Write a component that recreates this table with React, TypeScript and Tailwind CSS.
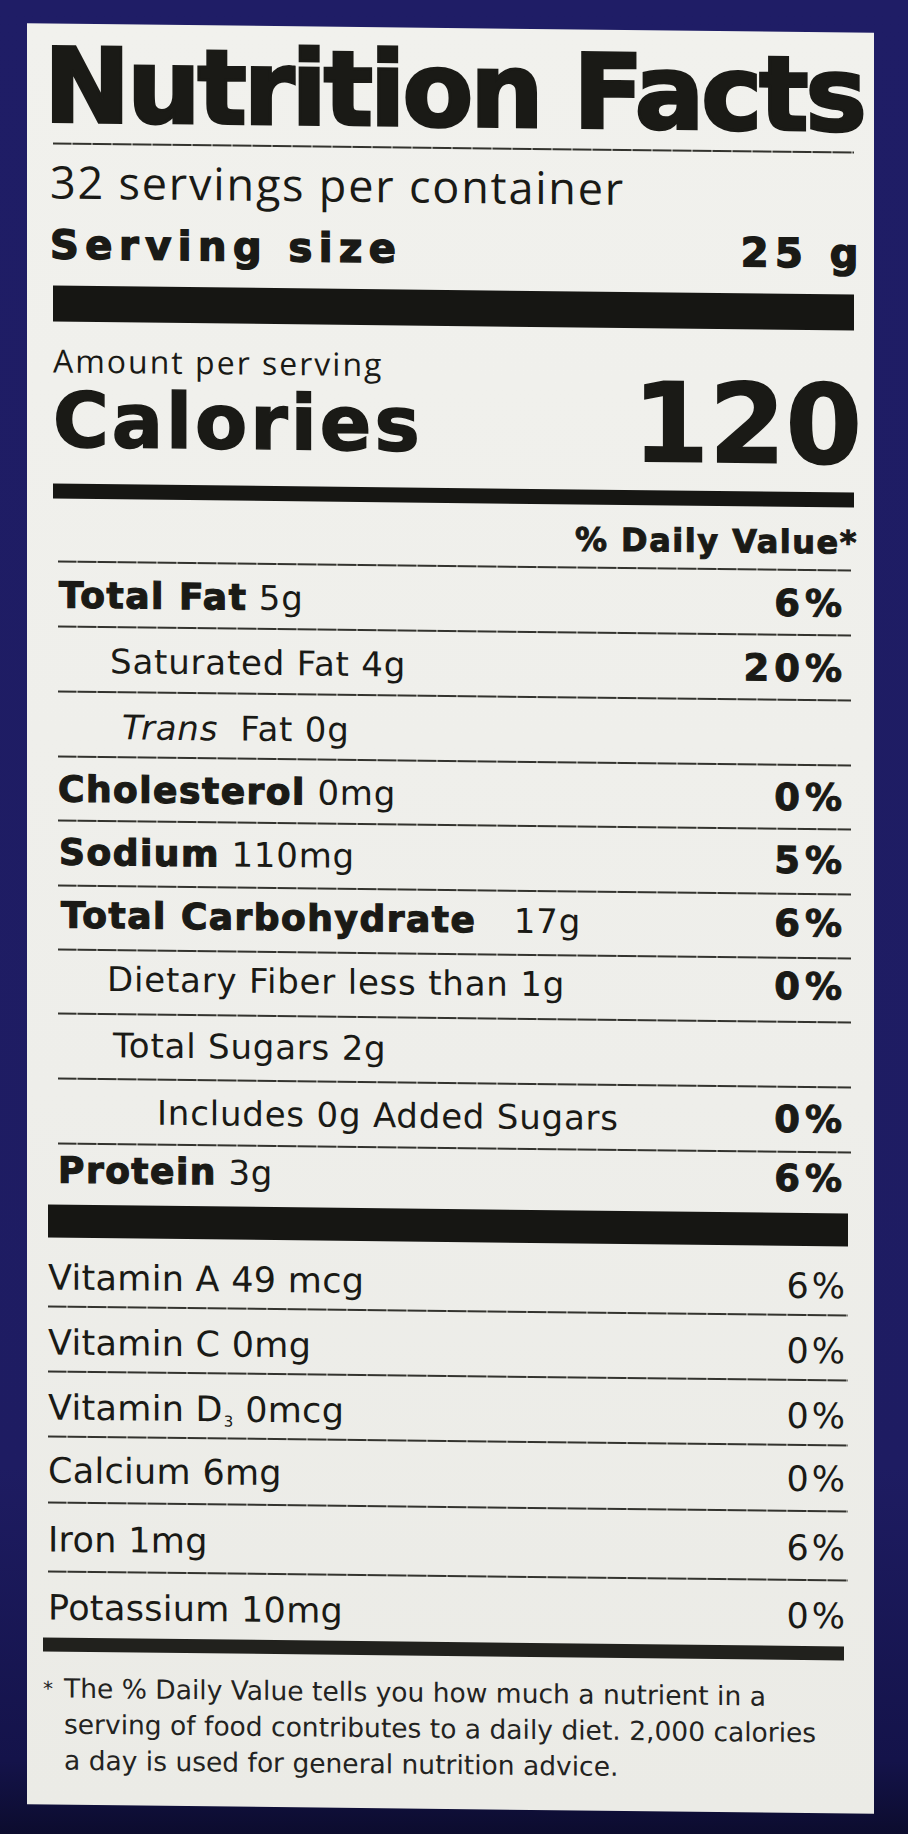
import React from "react";

const RULE =
  "h-[2px] w-full shrink-0 bg-[repeating-linear-gradient(90deg,#33332e_0px,#33332e_18px,#85857f_18px,#85857f_20px)]";

type Row = {
  h: string;
  pt: string;
  label: React.ReactNode;
  pct?: string;
  rule?: boolean;
};

const B = ({ children }: { children: React.ReactNode }) => (
  <span className="font-bold tracking-[1.5px] [-webkit-text-stroke:1.2px_currentColor]">{children}</span>
);
const R = ({ children, cls = "" }: { children: React.ReactNode; cls?: string }) => (
  <span className={`text-[34px] font-normal tracking-[0.8px] ${cls}`}>{children}</span>
);

const upperRows: Row[] = [
  {
    h: "h-[65px]",
    pt: "pt-[13px]",
    label: (
      <span className="pl-[1px]">
        <B>Total Fat</B> <R>5g</R>
      </span>
    ),
    pct: "6%",
  },
  {
    h: "h-[65px]",
    pt: "pt-[13px]",
    label: (
      <span className="pl-[52px]">
        <R>Saturated Fat 4g</R>
      </span>
    ),
    pct: "20%",
  },
  {
    h: "h-[65px]",
    pt: "pt-[14px]",
    label: (
      <span className="pl-[64px]">
        <R cls="italic">Trans</R>
        <R cls="ml-[22px]">Fat 0g</R>
      </span>
    ),
  },
  {
    h: "h-[64px]",
    pt: "pt-[12px]",
    label: (
      <span className="pl-[0px]">
        <B>Cholesterol</B> <R>0mg</R>
      </span>
    ),
    pct: "0%",
  },
  {
    h: "h-[65px]",
    pt: "pt-[11px]",
    label: (
      <span className="pl-[1px]">
        <B>Sodium</B> <R>110mg</R>
      </span>
    ),
    pct: "5%",
  },
  {
    h: "h-[64px]",
    pt: "pt-[9px]",
    label: (
      <span className="pl-[3px]">
        <B>Total Carbohydrate</B> <R cls="ml-[26px]">17g</R>
      </span>
    ),
    pct: "6%",
  },
  {
    h: "h-[64px]",
    pt: "pt-[8px]",
    label: (
      <span className="pl-[49px]">
        <R>Dietary Fiber less than 1g</R>
      </span>
    ),
    pct: "0%",
  },
  {
    h: "h-[65px]",
    pt: "pt-[10px]",
    label: (
      <span className="pl-[55px]">
        <R>Total Sugars 2g</R>
      </span>
    ),
  },
  {
    h: "h-[65px]",
    pt: "pt-[12px]",
    label: (
      <span className="pl-[99px]">
        <R>Includes 0g Added Sugars</R>
      </span>
    ),
    pct: "0%",
  },
  {
    h: "h-[62px]",
    pt: "pt-[6px]",
    label: (
      <span className="pl-[0px]">
        <B>Protein</B> <R>3g</R>
      </span>
    ),
    pct: "6%",
  },
];

const vitaminRows: Row[] = [
  { h: "h-[68px]", pt: "pt-[20px]", label: "Vitamin A 49 mcg", pct: "6%", rule: false },
  { h: "h-[65px]", pt: "pt-[15px]", label: "Vitamin C 0mg", pct: "0%", rule: true },
  {
    h: "h-[65px]",
    pt: "pt-[15px]",
    label: (
      <>
        Vitamin D<span className="ml-[1px] text-[15px] align-[-5px]">3</span> 0mcg
      </>
    ),
    pct: "0%",
    rule: true,
  },
  { h: "h-[66px]", pt: "pt-[13px]", label: "Calcium 6mg", pct: "0%", rule: true },
  { h: "h-[69px]", pt: "pt-[16px]", label: "Iron 1mg", pct: "6%", rule: true },
  { h: "h-[67px]", pt: "pt-[15px]", label: "Potassium 10mg", pct: "0%", rule: true },
];

export default function App() {
  return (
    <div className="w-[908px] h-[1834px] overflow-hidden bg-[linear-gradient(180deg,#1f1d66_0%,#1e1c62_80%,#14134a_96%,#0c0c2e_100%)] pt-[28px] pl-[27px]">
      <div className="w-[847px] h-[1781px] skew-y-[0.65deg] bg-[linear-gradient(180deg,#f1f1ed_0%,#eeeeea_60%,#ebebe6_100%)] pl-[26px] pr-[20px] pt-[12px] text-[#1a1a16] font-['DejaVu_Sans',sans-serif] flex flex-col">
        {/* Title */}
        <div className="ml-[-9px] h-[100px] shrink-0 text-[103px] leading-[100px] font-bold tracking-[-3px] whitespace-nowrap [-webkit-text-stroke:3px_currentColor]">
          Nutrition Facts
        </div>
        <div className={`mt-[7px] ${RULE}`} />
        <div className="mt-[13px] ml-[-3px] h-[48px] shrink-0 font-['Open_Sans',sans-serif] text-[45px] leading-[48px] tracking-[1.8px] whitespace-nowrap">
          32 servings per container
        </div>
        <div className="mt-[17px] h-[44px] shrink-0 flex justify-between text-[40px] leading-[44px] font-bold tracking-[6.5px] whitespace-nowrap [-webkit-text-stroke:1.5px_currentColor]">
          <span className="ml-[-3px]">Serving size</span>
          <span className="mr-[-11px]">25 g</span>
        </div>
        <div className="mt-[19px] h-[36px] shrink-0 bg-[#161613]" />
        <div className="mt-[21px] h-[36px] shrink-0 font-['Open_Sans',sans-serif] text-[32px] leading-[36px] tracking-[2px] whitespace-nowrap">
          Amount per serving
        </div>
        <div className="h-[78px] shrink-0 flex justify-between items-start font-bold whitespace-nowrap [-webkit-text-stroke:1.5px_currentColor]">
          <span className="mt-[7px] text-[76px] leading-[70px] tracking-[3px]">Calories</span>
          <span className="mt-[3px] mr-[-8px] text-[110px] leading-[70px]">120</span>
        </div>
        <div className="mt-[27px] h-[15px] shrink-0 bg-[#161613]" />
        <div className="mt-[17px] mr-[-4px] h-[36px] shrink-0 flex justify-end text-[32px] leading-[36px] font-bold tracking-[1.5px] whitespace-nowrap [-webkit-text-stroke:1px_currentColor]">
          % Daily Value*
        </div>

        {/* Nutrient rows */}
        <div className="mt-[9px] ml-[5px] mr-[3px] flex flex-col shrink-0">
          {upperRows.map((r, i) => (
            <div key={i} className={`${r.h} flex flex-col shrink-0`}>
              <div className={RULE} />
              <div className={`${r.pt} flex justify-between items-baseline`}>
                <div className="text-[36px] leading-[40px] whitespace-nowrap">{r.label}</div>
                {r.pct ? (
                  <div className="pr-[4px] text-[37px] leading-[40px] font-bold tracking-[5px] [-webkit-text-stroke:1px_currentColor]">
                    {r.pct}
                  </div>
                ) : null}
              </div>
            </div>
          ))}
        </div>

        {/* Vitamins */}
        <div className="ml-[-5px] mr-[6px] flex flex-col shrink-0">
          <div className="h-[33px] shrink-0 bg-[#161613]" />
          {vitaminRows.map((r, i) => (
            <div key={i} className={`${r.h} flex flex-col shrink-0`}>
              {r.rule ? <div className={RULE} /> : null}
              <div className={`${r.pt} flex justify-between items-baseline`}>
                <div className="text-[35px] leading-[40px] tracking-[0.3px] whitespace-nowrap">{r.label}</div>
                <div className="text-[35px] leading-[40px] tracking-[3px]">{r.pct}</div>
              </div>
            </div>
          ))}
        </div>
        <div className="ml-[-10px] mr-[10px] h-[14px] shrink-0 bg-[#21211d]" />

        {/* Footnote */}
        <div className="mt-[19px] ml-[-10px] flex items-start shrink-0 text-[#23231f]">
          <span className="w-[21px] shrink-0 text-[20px] leading-[36px]">*</span>
          <div className="text-[26.5px] leading-[36px] whitespace-nowrap">
            The % Daily Value tells you how much a nutrient in a
            <br />
            serving of food contributes to a daily diet. 2,000 calories
            <br />
            a day is used for general nutrition advice.
          </div>
        </div>
      </div>
    </div>
  );
}
